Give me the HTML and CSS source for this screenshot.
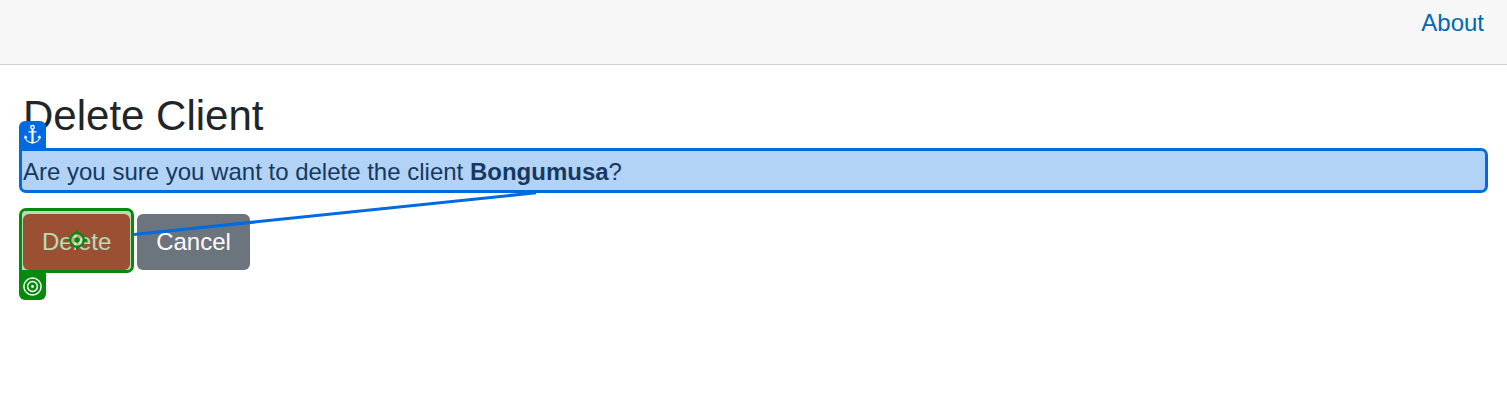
FILE: index.html
```html
<!DOCTYPE html>
<html lang="en">
<head>
<meta charset="utf-8">
<title>Delete Client</title>
<link rel="stylesheet" href="styles.css">
</head>
<body>
<header class="topbar"><a class="nav-link">About</a></header>
<main class="content">
  <h2 class="title">Delete Client</h2>
  <p class="question">Are you sure you want to delete the client <strong>Bongumusa</strong>?</p>
  <div class="actions">
    <button class="btn btn-danger">Delete</button>
    <button class="btn btn-secondary">Cancel</button>
  </div>
</main>
<div class="mark mark-anchor"></div>
<div class="badge badge-anchor">
  <svg width="27" height="27" viewBox="0 0 27 27" fill="none" stroke="#fff" stroke-width="1.3">
    <circle cx="13.5" cy="6.3" r="1.8"/>
    <path d="M9.500 10.800h8M6.300 15.300c0 4.200 3.200 6.500 7.200 6.500s7.200-2.300 7.200-6.500M5.400 17.200l.9-1.900 1.900 1.200M21.600 17.200l-.9-1.900-1.900 1.200"/>
    <path d="M13.500 8v14.500" stroke-width="2.200"/>
  </svg>
</div>
<div class="mark mark-target"></div>
<div class="badge badge-target">
  <svg width="27" height="28" viewBox="0 0 27 28" fill="none" stroke="#fff" stroke-width="1.500">
    <circle cx="13.500" cy="14.500" r="8.600"/>
    <circle cx="13.500" cy="14.500" r="4.900"/>
    <circle cx="13.500" cy="14.500" r="1.400" fill="#fff" stroke="none"/>
  </svg>
</div>
<svg class="overlay" width="1507" height="401" viewBox="0 0 1507 401" fill="none">
  <clipPath id="link-clip"><path d="M134 193H536V260H134z"/></clipPath>
  <path d="M130 235L540 192.300" stroke="#006ae0" stroke-width="3" clip-path="url(#link-clip)"/>
  <circle cx="77" cy="240" r="6.800" fill="#fff" fill-opacity=".5" stroke="#058a0b" stroke-width="2.300"/>
  <path d="M77 230v3M77 247v3M67 240h3M84 240h3" stroke="#058a0b" stroke-width="2"/>
  <circle cx="77" cy="240" r="2.800" fill="#058a0b"/>
</svg>
</body>
</html>
```
FILE: styles.css
```css
* { box-sizing: border-box; }
body {
  margin: 0;
  height: 401px;
  position: relative;
  overflow: hidden;
  background: #fff;
  color: #212529;
  font: 24px/36px "Liberation Sans", Arial, sans-serif;
}
.topbar {
  display: flex;
  justify-content: flex-end;
  height: 65px;
  padding: 5px 23px 0;
  background: #f7f7f7;
  border-bottom: 1px solid #d2d2d2;
}
.nav-link { color: #0069b4; }
.content { padding: 26px 23px 0; }
.title { margin: 0; font-size: 42px; line-height: 50px; font-weight: 400; }
.question { margin: 13px 0 24px; }
.actions { display: flex; gap: 7px; }
.btn {
  height: 56px;
  padding: 0 19px;
  border: 0;
  border-radius: 6px;
  color: #fff;
  font: inherit;
}
.btn-danger { width: 107px; background: #dc3545; }
.btn-secondary { width: 113px; background: #6c757d; }
.mark { position: absolute; border: 3px solid; }
.mark-anchor {
  left: 19px;
  top: 148px;
  width: 1469px;
  height: 45px;
  border-color: #006ae0;
  border-radius: 0 7px 7px 7px;
  background: rgba(0, 106, 224, .3);
  background-clip: padding-box;
}
.mark-target {
  left: 19px;
  top: 208px;
  width: 115px;
  height: 65px;
  border-color: #058a0b;
  border-radius: 7px 7px 7px 0;
  background: rgba(5, 138, 11, .3);
  background-clip: padding-box;
}
.badge { position: absolute; left: 19px; width: 27px; }
.badge svg { display: block; }
.badge-anchor { top: 121px; height: 28px; background: #006ae0; border-radius: 6px 6px 0 0; }
.badge-target { top: 272px; height: 28px; background: #058a0b; border-radius: 0 0 6px 6px; }
.overlay { position: absolute; left: 0; top: 0; }
```
